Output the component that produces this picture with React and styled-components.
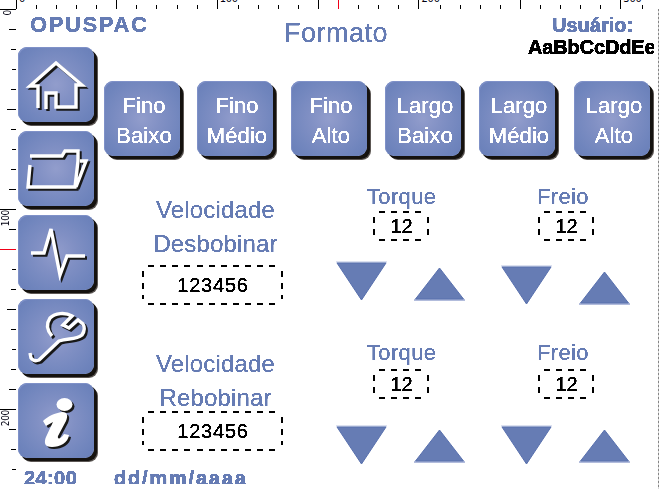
import React from 'react';
import styled, { createGlobalStyle } from 'styled-components';

const BLUE = '#667cb4';

const GlobalStyle = createGlobalStyle`
  * { box-sizing: border-box; }
  body { margin: 0; background: #fff; overflow: hidden; }
`;

const Page = styled.div`
  display: grid;
  grid-template-columns: 16px 1fr;
  grid-template-rows: 9px 1fr;
  width: 659px;
  height: 489px;
  overflow: hidden;
  background: #fff;
  font-family: "Liberation Sans", Arial, sans-serif;
  color: ${BLUE};
`;

const Corner = styled.div`
  height: 10px;
  border-bottom: 1px solid #000;
`;

const TopRuler = styled.div`
  display: flex;
  align-items: flex-end;
  height: 9px;
  overflow: hidden;
`;

const TopTick = styled.div`
  flex: 0 0 20.07px;
  height: ${(p) => (p.$long ? 9 : 4)}px;
  border-left: 1px solid ${(p) => (p.$red ? '#f00018' : '#000')};
`;

const TopNumber = styled.span`
  display: block;
  margin: -7px 0 0 2px;
  font: 11px/12px "DejaVu Sans Condensed", "DejaVu Sans", sans-serif;
  letter-spacing: -0.2px;
  color: #001;
`;

const SideRuler = styled.div`
  display: flex;
  flex-direction: column;
  align-items: flex-end;
  height: 480px;
  overflow: hidden;
`;

const SideTick = styled.div`
  flex: 0 0 20px;
  width: ${(p) => p.$length}px;
  border-top: 1px solid ${(p) => (p.$red ? '#f00018' : '#000')};
`;

const SideNumber = styled.span`
  display: block;
  width: 12px;
  margin-left: ${(p) => p.$offset || 0}px;
  writing-mode: vertical-rl;
  transform: rotate(180deg);
  font: 10px/12px "DejaVu Sans Condensed", "DejaVu Sans", sans-serif;
  letter-spacing: -0.3px;
  color: #001;
`;

const Screen = styled.div`
  height: 480px;
  background: repeating-linear-gradient(#858585 0 2px, #d8d8d8 2px 4px) right 0 top 0 / 1px 100% no-repeat;
`;

const Header = styled.header`
  display: flex;
  height: 38px;
`;

const Brand = styled.div`
  width: 240px;
  padding: 4px 0 0 14px;
  font: bold 22px/24px "Liberation Sans", sans-serif;
  letter-spacing: 1.6px;
  -webkit-text-stroke: 0.3px ${BLUE};
  filter: url(#crisp);
`;

const Title = styled.h1`
  margin: 0;
  width: 150px;
  padding: 9px 0 0 28px;
  font: 27px/30px "Liberation Sans", sans-serif;
  letter-spacing: 0.5px;
  -webkit-text-stroke: 0.2px ${BLUE};
  filter: url(#crisp);
`;

const User = styled.div`
  width: 126px;
  height: 50px;
  margin: 0 5px 0 auto;
  padding-top: 5px;
  overflow: hidden;
  font: bold 20px/22px "Liberation Sans", sans-serif;
  white-space: nowrap;
  filter: url(#crisp);
`;

const UserLabel = styled.div`
  padding-left: 24px;
  -webkit-text-stroke: 0.6px ${BLUE};
`;

const UserName = styled.div`
  color: #000;
  letter-spacing: -0.15px;
  -webkit-text-stroke: 0.6px #000;
`;

const Body = styled.div`
  display: flex;
  height: 421px;
`;

const Sidebar = styled.nav`
  display: flex;
  flex-direction: column;
  gap: 9px;
  width: 88px;
  padding-left: 2px;
`;

const Key = styled.button`
  display: block;
  flex: none;
  width: 76px;
  height: 75px;
  padding: 0;
  border: 0;
  border-radius: 9px;
  background: radial-gradient(circle at 50% 50%, #929dcc 0, #8190c4 35%, #7085bd 75%, #687eb8 100%);
  box-shadow: inset 1px 1px 0 #7f91c8, 2px 2px 0 #15120f, 3px 3px 0 #15120f, 4px 4px 0 #5c5754;
  color: #fff;
`;

const FormatKey = styled(Key)`
  padding: 4px 0 0 4px;
  font: 22px/29.5px "Liberation Sans", sans-serif;
  text-align: center;
  -webkit-text-stroke: 0.2px #fff;
`;

const KeyText = styled.span`
  display: block;
  margin: 0 -4px;
  letter-spacing: 0.1px;
  filter: url(#crisp);
`;

const Content = styled.main`
  width: 555px;
  padding-top: 34px;
`;

const Formats = styled.div`
  display: grid;
  grid-template-columns: 93px 94px 94px 94px 95px 76px;
  height: 104px;
`;

const Panel = styled.section`
  display: grid;
  grid-template-columns: 232px 165px 140px;
  height: 156px;
`;

const Speed = styled.div`
  width: 141px;
  margin-left: 38px;
  padding-top: ${(p) => p.$top}px;
`;

const SpeedLabel = styled.div`
  height: ${(p) => p.$height}px;
  margin: 0 -8px;
  padding-left: 6px;
  font: 24px/34px "Liberation Sans", sans-serif;
  letter-spacing: 0.15px;
  text-align: center;
  -webkit-text-stroke: 0.2px ${BLUE};
  filter: url(#crisp);
`;

const Field = styled.div`
  --h: repeating-linear-gradient(90deg, #000 0 6px, transparent 6px ${(p) => p.$period || 12}px);
  --v: repeating-linear-gradient(#000 0 6px, transparent 6px 12px);
  width: ${(p) => p.$width}px;
  height: ${(p) => p.$height}px;
  background:
    var(--h) 6px 0 / calc(100% - 12px) 2px no-repeat,
    var(--h) 6px 100% / calc(100% - 12px) 2px no-repeat,
    var(--v) 0 6px / 2px calc(100% - 12px) no-repeat,
    var(--v) 100% 6px / 2px calc(100% - 12px) no-repeat;
  color: #000;
  font-size: 20px;
  line-height: ${(p) => p.$height + 1}px;
  letter-spacing: ${(p) => p.$spacing || 0}px;
  text-align: center;
`;

const FieldValue = styled.span`
  display: block;
  padding-left: 1px;
  -webkit-text-stroke: 0.25px #000;
  filter: url(#crisp);
`;

const Control = styled.div`
  display: flex;
  flex-direction: column;
  width: 129px;
`;

const ControlLabel = styled.div`
  height: ${(p) => p.$height}px;
  padding-left: ${(p) => p.$indent}px;
  font: 22px/23px "Liberation Sans", sans-serif;
  letter-spacing: 0.35px;
  -webkit-text-stroke: 0.2px ${BLUE};
  filter: url(#crisp);
`;

const ControlField = styled.div`
  padding-left: 37px;
`;

const Arrows = styled.div`
  display: flex;
  gap: 27px;
  align-items: flex-start;
  padding-top: ${(p) => p.$top}px;
`;

const UpSlot = styled.div`
  padding-top: ${(p) => p.$drop}px;
`;

const Glyph = styled.svg`
  display: block;
`;

const Footer = styled.footer`
  display: flex;
  gap: 35px;
  height: 16px;
  padding-left: 8px;
  overflow: hidden;
  font: bold 20px/20px "Liberation Sans", sans-serif;
  -webkit-text-stroke: 0.6px ${BLUE};
  filter: url(#crisp);
`;

const Clock = styled.span`
  width: 55px;
  letter-spacing: 0.4px;
`;

const DateText = styled.span`
  letter-spacing: 1.8px;
`;

const strokes = {
  home: 'M20 61V39H12L38 16L64 38H58V60H38V46H28V62',
  folder: 'M12 25H44L47 20H60V30L57 56H10L12 34M62 30H68L58 56',
  pulse: 'M13 38H26L33 14L42 60L49 41H67',
  wrench:
    'M12 54L13 59Q16 63 21 61L41 42C50 39 58 41 64 36Q68 30 65 25L60 21L51 29L45 26L54 17C47 13 37 14 32 19Q26 28 34 37',
};

function StrokeIcon({ name }) {
  return (
    <Glyph width="76" height="75" viewBox="0 0 76 75" fill="none" strokeLinejoin="miter">
      <path d={strokes[name]} stroke="#181818" strokeWidth="3.4" transform="translate(2 2)" />
      <path d={strokes[name]} stroke="#fff" strokeWidth="3.4" />
    </Glyph>
  );
}

function InfoShape() {
  return (
    <>
      <ellipse cx="46.5" cy="21.5" rx="8" ry="6.5" />
      <path d="M25 38C30 33 37 30 44 29C50 29 50 33 48 38L40 53C39 57 43 56 46 51L51 52C50 60 42 64 34 64C26 64 26 59 28 54L35 39L28 43Z" />
    </>
  );
}

function InfoIcon() {
  return (
    <Glyph width="76" height="75" viewBox="0 0 76 75">
      <g fill="#181818" transform="translate(2 2)"><InfoShape /></g>
      <g fill="#fff"><InfoShape /></g>
    </Glyph>
  );
}

function DownArrow() {
  return (
    <Glyph width="51" height="40" viewBox="0 0 51 40">
      <path d="M0 0H51V2H0Z" fill="#dce1f0" />
      <path d="M1 2H50L25.5 39Z" fill={BLUE} stroke="#5870ae" />
    </Glyph>
  );
}

function UpArrow() {
  return (
    <Glyph width="51" height="34" viewBox="0 0 51 34">
      <path d="M0 32H51V34H0Z" fill="#b2bcdc" />
      <path d="M1.5 32L25.5 1L49.5 32Z" fill={BLUE} stroke="#5870ae" />
    </Glyph>
  );
}

function ControlGroup({ label, indent, labelHeight, top, drop }) {
  return (
    <Control>
      <ControlLabel $height={labelHeight} $indent={indent}>{label}</ControlLabel>
      <ControlField>
        <Field $width={56} $height={30}><FieldValue>12</FieldValue></Field>
      </ControlField>
      <Arrows $top={top}>
        <DownArrow />
        <UpSlot $drop={drop}><UpArrow /></UpSlot>
      </Arrows>
    </Control>
  );
}

const formats = [
  ['Fino', 'Baixo'],
  ['Fino', 'Médio'],
  ['Fino', 'Alto'],
  ['Largo', 'Baixo'],
  ['Largo', 'Médio'],
  ['Largo', 'Alto'],
];

const topNumbers = { 0: '0', 10: '100', 20: '200', 30: '300' };
const sideLengths = [7, 5, 4, 5, 9, 5, 4, 5, 7, 16, 7, 16, 4, 5, 9, 5, 4, 5, 7, 16, 7, 5, 4];

export default function App() {
  return (
    <Page>
      <GlobalStyle />
      <svg width="0" height="0" style={{ position: 'absolute' }} aria-hidden="true">
        <filter id="crisp" x="0" y="0" width="100%" height="100%" colorInterpolationFilters="sRGB">
          <feComponentTransfer><feFuncA type="linear" slope="6" intercept="-2.2" /></feComponentTransfer>
        </filter>
      </svg>
      <Corner />
      <TopRuler>
        {Array.from({ length: 33 }, (_, i) => (
          <TopTick key={i} $long={i % 5 === 0 || i === 16} $red={i === 16}>
            {topNumbers[i] && <TopNumber>{topNumbers[i]}</TopNumber>}
          </TopTick>
        ))}
      </TopRuler>
      <SideRuler>
        <SideTick $length={0}><SideNumber $offset={-14}>0</SideNumber></SideTick>
        {sideLengths.map((length, i) => (
          <SideTick key={i} $length={length} $red={i === 11}>
            {i === 9 && <SideNumber>100</SideNumber>}
            {i === 19 && <SideNumber>200</SideNumber>}
          </SideTick>
        ))}
      </SideRuler>
      <Screen>
        <Header>
          <Brand>OPUSPAC</Brand>
          <Title>Formato</Title>
          <User>
            <UserLabel>Usuário:</UserLabel>
            <UserName>AaBbCcDdEe</UserName>
          </User>
        </Header>
        <Body>
          <Sidebar>
            {Object.keys(strokes).map((name) => (
              <Key key={name} aria-label={name}><StrokeIcon name={name} /></Key>
            ))}
            <Key aria-label="info"><InfoIcon /></Key>
          </Sidebar>
          <Content>
            <Formats>
              {formats.map(([size, height]) => (
                <FormatKey key={size + height}>
                  <KeyText>{size}</KeyText>
                  <KeyText>{height}</KeyText>
                </FormatKey>
              ))}
            </Formats>
            <Panel>
              <Speed $top={8}>
                <SpeedLabel $height={72}>Velocidade<br />Desbobinar</SpeedLabel>
                <Field $width={141} $height={40} $period={12.13} $spacing={0.8}><FieldValue>123456</FieldValue></Field>
              </Speed>
              <ControlGroup label="Torque" indent={31} labelHeight={26} top={20} drop={6} />
              <ControlGroup label="Freio" indent={36} labelHeight={26} top={24} drop={6} />
            </Panel>
            <Panel>
              <Speed $top={6}>
                <SpeedLabel $height={64}>Velocidade<br />Rebobinar</SpeedLabel>
                <Field $width={141} $height={40} $period={12.13} $spacing={0.8}><FieldValue>123456</FieldValue></Field>
              </Speed>
              <ControlGroup label="Torque" indent={31} labelHeight={28} top={26} drop={4} />
              <ControlGroup label="Freio" indent={36} labelHeight={28} top={26} drop={4} />
            </Panel>
          </Content>
        </Body>
        <Footer>
          <Clock>24:00</Clock>
          <DateText>dd/mm/aaaa</DateText>
        </Footer>
      </Screen>
    </Page>
  );
}
